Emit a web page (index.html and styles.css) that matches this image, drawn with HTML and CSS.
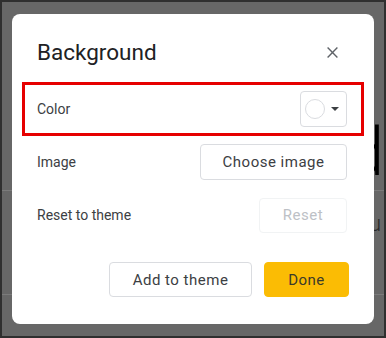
FILE: index.html
```html
<!DOCTYPE html>
<html lang="en">
<head>
    <meta charset="UTF-8">
    <meta name="viewport" content="width=device-width, initial-scale=1.0">
    <title>Background</title>
    <link rel="stylesheet" href="styles.css">
</head>
<body>
    <div class="screen">
        <!-- Slide behind the dialog -->
        <div class="slide">
            <div class="slide-letter big">d</div>
            <div class="slide-line"></div>
            <div class="slide-letter small">u</div>
            <div class="slide-line low"></div>
        </div>

        <div class="dialog">
            <div class="dialog-header">
                <h1 class="dialog-title">Background</h1>
                <button class="close-btn" aria-label="Close">
                    <svg width="11" height="11" viewBox="0 0 11 11">
                        <path d="M0.6 0.6 L10.4 10.4 M10.4 0.6 L0.6 10.4" stroke="#5f6368" stroke-width="1.4" fill="none"/>
                    </svg>
                </button>
            </div>

            <div class="row row-highlight">
                <span class="row-label">Color</span>
                <button class="color-btn">
                    <span class="swatch"></span>
                    <span class="caret"></span>
                </button>
            </div>

            <div class="row row-image">
                <span class="row-label">Image</span>
                <button class="btn btn-choose">Choose image</button>
            </div>

            <div class="row row-reset">
                <span class="row-label">Reset to theme</span>
                <button class="btn btn-reset" disabled>Reset</button>
            </div>

            <div class="dialog-footer">
                <button class="btn btn-add">Add to theme</button>
                <button class="btn btn-done">Done</button>
            </div>
        </div>
    </div>
</body>
</html>
```

FILE: styles.css
```css
body {
    margin: 0;
    font-family: Roboto, "Liberation Sans", Arial, sans-serif;
}
.screen {
    position: relative;
    width: 386px;
    height: 338px;
    box-sizing: border-box;
    border: 2px solid #2f2f2f;
    background-color: #676767;
    overflow: hidden;
}

/* slide content behind the overlay */
.slide {
    display: flex;
    flex-direction: column;
    align-items: flex-end;
    padding-top: 118px;
}
.slide-letter {
    color: #000;
    font-weight: 300;
    line-height: 1;
}
.slide-letter.big {
    font-size: 66px;
    margin-right: 0;
}
.slide-letter.small {
    font-size: 22px;
    margin-right: 3px;
    margin-top: 22px;
    color: #2a2a2a;
}
.slide-line {
    width: 100%;
    height: 1px;
    margin-top: 4px;
    background-color: #7b7b7b;
}
.slide-line.low {
    margin-top: 59px;
}

/* dialog */
.dialog {
    position: absolute;
    left: 10px;
    top: 12px;
    width: 362px;
    height: 310px;
    box-sizing: border-box;
    padding: 24px 27px 0 25px;
    background-color: #fff;
    border-radius: 8px;
}
.dialog-header {
    display: flex;
    align-items: center;
    justify-content: space-between;
    height: 28px;
}
.dialog-title {
    margin: 0;
    font-size: 22.5px;
    font-weight: 400;
    line-height: 28px;
    color: #202124;
}
.close-btn {
    display: flex;
    align-items: center;
    justify-content: center;
    width: 24px;
    height: 24px;
    margin-right: 3px;
    padding: 0;
    border: none;
    background: none;
}

.row {
    display: flex;
    align-items: center;
    justify-content: space-between;
    height: 36px;
}
.row-label {
    font-size: 14px;
    color: #3c4043;
}
.row-highlight {
    height: 54px;
    box-sizing: border-box;
    margin: 16px -17px 0 -15px;
    padding: 0 14px 0 12px;
    border: 3px solid #e60000;
}
.row-image {
    margin-top: 8px;
}
.row-reset {
    margin-top: 17px;
}

.color-btn {
    display: flex;
    align-items: center;
    width: 47px;
    height: 36px;
    padding: 0 0 0 4px;
    border: 1px solid #dadce0;
    border-radius: 4px;
    background-color: #fff;
}
.swatch {
    width: 18px;
    height: 18px;
    border: 1px solid #dadce0;
    border-radius: 50%;
}
.caret {
    margin-left: 6px;
    border-left: 4px solid transparent;
    border-right: 4px solid transparent;
    border-top: 4px solid #3c4043;
}

.btn {
    height: 36px;
    padding: 0;
    border: 1px solid #dadce0;
    border-radius: 4px;
    background-color: #fff;
    font-family: Roboto, "Liberation Sans", Arial, sans-serif;
    font-size: 15px;
    font-weight: 400;
    letter-spacing: 0.5px;
    color: #3c4043;
}
.btn-choose {
    width: 147px;
}
.btn-reset {
    width: 88px;
    height: 35px;
    border-color: #f1f3f4;
    color: #bdc1c6;
}

.dialog-footer {
    display: flex;
    justify-content: flex-end;
    gap: 12px;
    margin-top: 29px;
    margin-right: -2px;
}
.btn-add {
    width: 143px;
    height: 35px;
}
.btn-done {
    width: 85px;
    height: 35px;
    border-color: #fbbc04;
    background-color: #fbbc04;
    color: #3b3a2a;
}
```
